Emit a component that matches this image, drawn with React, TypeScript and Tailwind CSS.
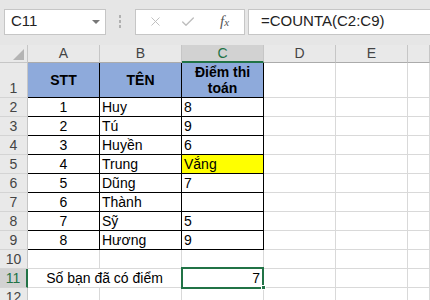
import React from 'react';
import { X, Check } from 'lucide-react';

const data: [string, string, string][] = [
  ['1', 'Huy', '8'],
  ['2', 'Tú', '9'],
  ['3', 'Huyền', '6'],
  ['4', 'Trung', 'Vắng'],
  ['5', 'Dũng', '7'],
  ['6', 'Thành', ''],
  ['7', 'Sỹ', '5'],
  ['8', 'Hương', '9'],
];

const font = { fontFamily: '"Liberation Sans", Arial, sans-serif' };

const RowHead = ({ n, h = 'h-[19px]', active = false }: { n: number; h?: string; active?: boolean }) => (
  <div
    className={`${h} flex items-end justify-center pb-[1px] text-[14px] leading-[16px] border-b border-[#d4d4d4] ${
      active ? 'bg-[#d2d2d2] text-[#217346] border-r-2 border-r-[#217346]' : 'bg-[#e9e9e9] text-[#444] border-r border-r-[#c6c6c6]'
    }`}
  >
    {n}
  </div>
);

const Blank = ({ h = 'h-[19px]' }: { h?: string }) => (
  <div className={`${h} border-r border-b border-[#d9d9d9]`} />
);

const App: React.FC = () => {
  return (
    <div className="w-[430px] h-[300px] overflow-hidden bg-white text-black" style={font}>
      {/* Formula bar */}
      <div className="h-[45px] bg-[#e6e6e6] flex items-center pb-[2px]">
        <div className="ml-[4px] w-[102px] h-[26px] bg-white border border-[#c6c6c6] flex items-center justify-between pl-[6px] pr-[5px]">
          <span className="text-[15px] text-[#222]">C11</span>
          <span className="w-0 h-0 border-l-[4px] border-r-[4px] border-t-[4px] border-l-transparent border-r-transparent border-t-[#777]" />
        </div>
        <div className="ml-[13px] flex flex-col gap-[2px]">
          <span className="w-[2px] h-[3px] bg-[#b0b0b0]" />
          <span className="w-[2px] h-[3px] bg-[#b0b0b0]" />
          <span className="w-[2px] h-[3px] bg-[#b0b0b0]" />
        </div>
        <div className="ml-[14px] w-[110px] h-[26px] bg-white border border-[#c6c6c6] flex items-center pl-[12px]">
          <X size={15} strokeWidth={1.5} className="text-[#bdbdbd]" />
          <Check size={16} strokeWidth={2} className="ml-[17px] text-[#bdbdbd]" />
          <span
            className="ml-[24px] italic text-[15px] text-[#555]"
            style={{ fontFamily: '"Liberation Serif", "Times New Roman", serif' }}
          >
            f<span className="text-[11px]">x</span>
          </span>
        </div>
        <div className="ml-[3px] flex-1 h-[26px] bg-white border-y border-l border-[#c6c6c6] flex items-center pl-[12px] text-[15px] text-[#222]">
          =COUNTA(C2:C9)
        </div>
      </div>

      {/* Sheet */}
      <div className="grid grid-cols-[28px_72px_82px_82px_72px_72px_1fr]">
        {/* column headers */}
        <div className="h-[18px] bg-[#e9e9e9] border-r border-b border-[#c6c6c6] flex items-end justify-end pr-[3px] pb-[2px]">
          <svg width="11" height="11" viewBox="0 0 11 11">
            <polygon points="11,0 11,11 0,11" fill="#b4b4b4" />
          </svg>
        </div>
        {['A', 'B'].map((c) => (
          <div key={c} className="h-[18px] bg-[#e9e9e9] border-r border-[#c6c6c6] border-b border-b-[#ababab] flex items-center justify-center text-[14px] text-[#444]">
            {c}
          </div>
        ))}
        <div className="h-[18px] bg-[#d2d2d2] border-r border-[#c6c6c6] border-b-2 border-b-[#217346] flex items-center justify-center pt-[1px] text-[14px] text-[#217346]">
          C
        </div>
        {['D', 'E', 'F'].map((c) => (
          <div key={c} className="h-[18px] bg-[#e9e9e9] border-r border-[#c6c6c6] border-b border-b-[#ababab] flex items-center justify-center text-[14px] text-[#444]">
            {c === 'F' ? '' : c}
          </div>
        ))}

        {/* row 1 */}
        <RowHead n={1} h="h-[35px]" />
        <div className="h-[35px] bg-[#8eaadb] border-r border-b border-black flex items-center justify-center font-bold text-[14px]">STT</div>
        <div className="h-[35px] bg-[#8eaadb] border-r border-b border-black flex items-center justify-center font-bold text-[14px]">TÊN</div>
        <div className="h-[35px] bg-[#8eaadb] border-r border-b border-black flex flex-col items-center justify-center font-bold text-[14px] leading-[16px]">
          <span>Điểm thi</span>
          <span>toán</span>
        </div>
        <Blank h="h-[35px]" />
        <Blank h="h-[35px]" />
        <Blank h="h-[35px]" />

        {/* rows 2-9 */}
        {data.map(([stt, name, score], i) => (
          <React.Fragment key={stt}>
            <RowHead n={i + 2} />
            <div className="h-[19px] border-r border-b border-black flex items-center justify-center text-[14px] leading-[18px]">{stt}</div>
            <div className="h-[19px] border-r border-b border-black flex items-center pl-[2px] text-[14px] leading-[18px]">{name}</div>
            <div
              className={`h-[19px] border-r border-b border-black flex items-center pl-[2px] text-[14px] leading-[18px] ${
                score === 'Vắng' ? 'bg-[#ffff00]' : ''
              }`}
            >
              {score}
            </div>
            <Blank />
            <Blank />
            <Blank />
          </React.Fragment>
        ))}

        {/* row 10 */}
        <RowHead n={10} />
        <Blank />
        <Blank />
        <Blank />
        <Blank />
        <Blank />
        <Blank />

        {/* row 11 */}
        <RowHead n={11} active />
        <div className="col-span-2 h-[19px] border-r border-b border-[#d9d9d9] flex items-center justify-center text-[14px] leading-[18px]">
          Số bạn đã có điểm
        </div>
        <div className="relative h-[19px] border-r border-b border-[#d9d9d9] flex items-center justify-end pr-[3px] text-[14px] leading-[18px]">
          7
          <div className="absolute -left-[1px] -top-[2px] w-[83px] h-[22px] border-2 border-[#217346]" />
          <div className="absolute -right-[3px] -bottom-[3px] w-[5px] h-[5px] bg-[#217346] border border-white" />
        </div>
        <Blank />
        <Blank />
        <Blank />

        {/* row 12 */}
        <RowHead n={12} />
        <Blank />
        <Blank />
        <Blank />
        <Blank />
        <Blank />
        <Blank />
      </div>
    </div>
  );
};

export default App;
